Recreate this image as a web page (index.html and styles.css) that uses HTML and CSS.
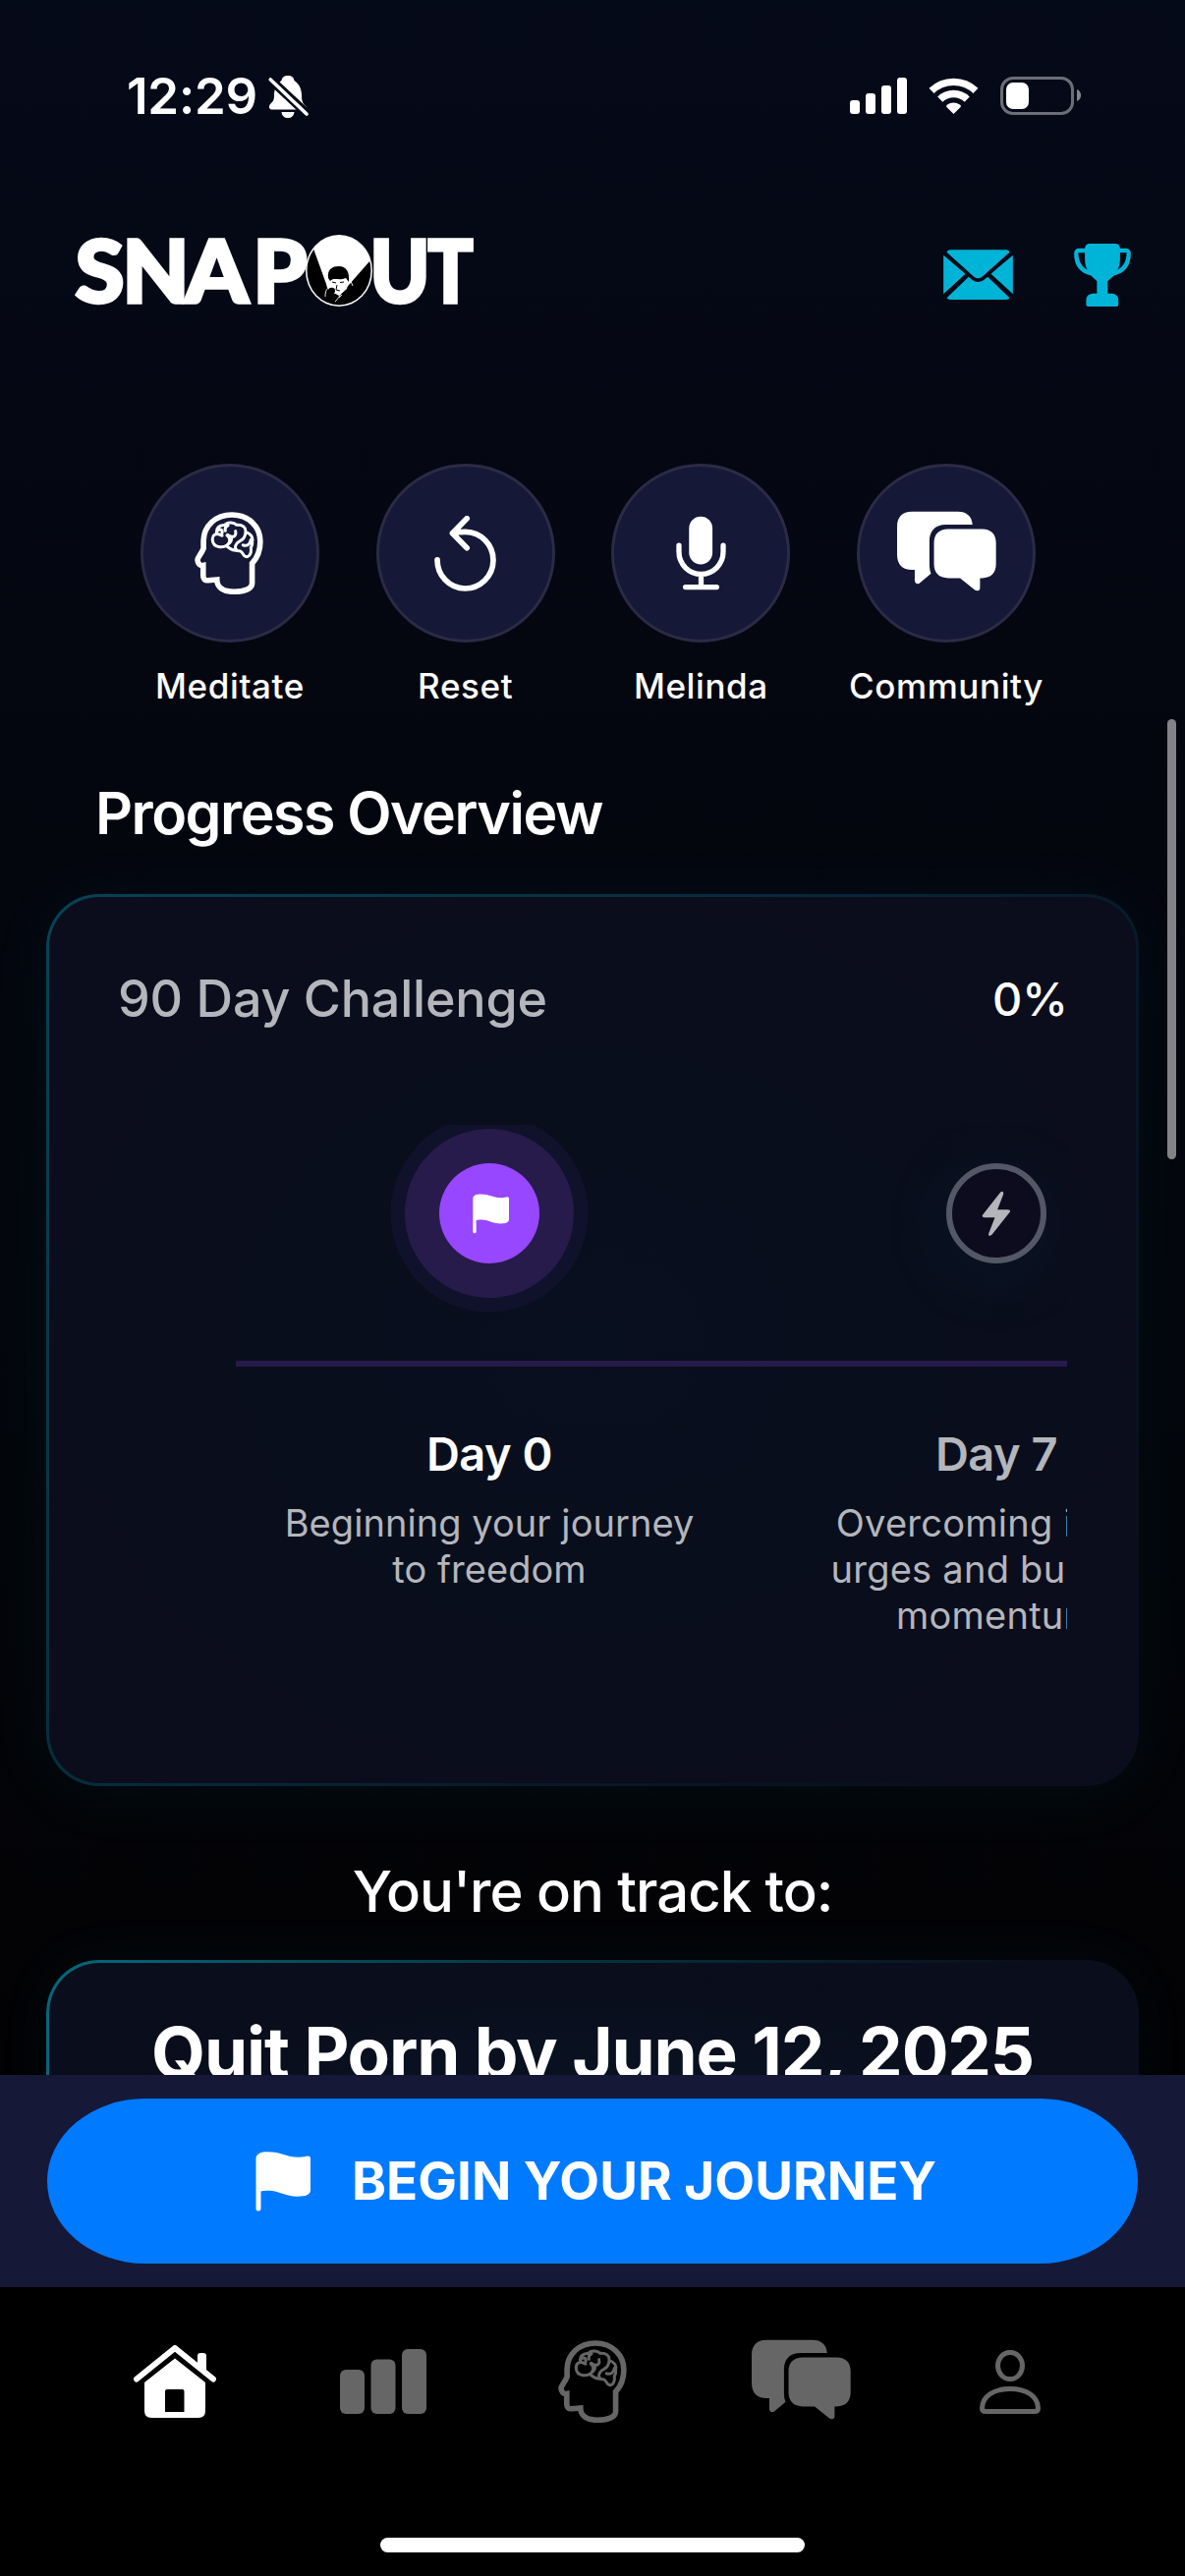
FILE: index.html
```html
<!DOCTYPE html>
<html lang="en">
<head>
<meta charset="utf-8">
<title>SnapOut</title>
<link rel="stylesheet" href="styles.css">
</head>
<body>
<svg class="defs" width="0" height="0">
  <symbol id="head" viewBox="204 212 210 253">
    <g fill="none" stroke="currentColor" stroke-linejoin="round" stroke-linecap="round">
      <path stroke-width="17" stroke-linejoin="miter" d="M318 221C370 221 405 258 405 303C405 332 396 353 380 370V430C380 448 355 457 325 457C292 457 272 443 272 420L245 422C235 423 230 417 230 408V376C220 378 212 369 213 358C214 350 224 342 231 324V300C232 255 268 221 318 221Z"/>
      <path stroke-width="9" d="M288 285C268 272 256 285 259 301C262 322 290 324 303 314C315 304 313 292 303 284M272 280C268 262 280 251 296 253C304 243 324 243 332 252C350 250 362 260 360 274C377 278 384 292 380 304C382 315 378 318 376 322C379 338 372 350 362 350C352 349 353 335 343 332C334 330 322 332 313 325L300 316M298 270C296 260 299 256 306 254M274 270C284 262 290 268 288 277M314 287C326 292 332 282 329 271M305 282L316 290C319 302 311 308 307 311M360 274C360 292 350 297 340 303C328 310 326 322 332 328M352 314C364 318 374 312 376 298"/>
    </g>
  </symbol>
  <symbol id="chats" viewBox="939 210 304 245">
    <path fill="currentColor" d="M1170 251C1168 225 1152 211 1125 211H984C955 211 939 228 939 257V343C939 372 955 390 984 390H993V422C993 432 1003 436 1010 429L1043 401C1040 395 1038 385 1038 372V302C1038 270 1056 251 1088 251ZM1096 265H1200C1227 265 1242 281 1242 308V372C1242 399 1227 415 1200 415H1193V445C1193 454 1183 456 1176 451L1132 415H1096C1067 415 1052 399 1052 372V308C1052 281 1067 265 1096 265Z"/>
  </symbol>
  <symbol id="flag" viewBox="260 2190 56 61">
    <path fill="currentColor" d="M260.5 2197C260.5 2192 266 2190.2 272 2190.2C287 2190.2 291 2195.8 304 2195.8C308 2195.8 311 2194.5 314 2194.5Q316 2194.7 316 2197V2229C316 2234 311 2235.7 303 2235.7C290 2235.7 284 2229.7 274 2229.7C269 2229.7 267 2230 265.5 2230.6V2248Q265.5 2250.5 263 2250.5Q260.5 2250.5 260.5 2248Z"/>
  </symbol>
</svg>

<header class="status">
  <div class="clock">
    <span class="time">12:29</span>
    <svg class="bell" viewBox="273 76 41 45">
      <path fill="#fff" d="M293 77C297 77 299 79 299.5 82C304 85 307 90 307 97C307 104 309 106 311 108C313.500 110 312 111.500 310 111.500H277C274 111.500 273 109 275 106C278 103 279 102 279 97C279 90 282 85 286.500 82C287 79 289 77 293 77ZM286.500 114H299.500C299 118 296.500 120 293 120S287 118 286.500 114Z"/>
      <path stroke="#050917" stroke-width="9" d="M270 76L317 120"/>
      <path stroke="#fff" stroke-width="3.600" stroke-linecap="round" d="M275.300 81L312 116"/>
    </svg>
  </div>
  <div class="signals">
    <svg class="bars" viewBox="0 0 58 37" fill="#fff">
      <rect y="23" width="10" height="14" rx="3"/><rect x="16" y="16" width="10" height="21" rx="3"/><rect x="32" y="8" width="10" height="29" rx="3"/><rect x="48" width="10" height="37" rx="3"/>
    </svg>
    <svg class="wifi" viewBox="436 117 151 112">
      <path fill="none" stroke="#fff" stroke-width="22" d="M443.500 157.500A98 98 0 0 1 579.500 157.500M470 184A59 59 0 0 1 553 184"/>
      <path fill="#fff" d="M511.500 229L490 208Q488 204 491 201Q511 188 532 201Q535 204 533 208Z"/>
    </svg>
    <svg class="battery" viewBox="1018 78 83 39">
      <rect x="1019.500" y="79.500" width="72" height="36" rx="11.500" fill="none" stroke="#6c6e77" stroke-width="3"/>
      <rect x="1024" y="84" width="23" height="27" rx="7" fill="#fff"/>
      <path fill="#84868d" d="M1096 91C1101.500 93 1101.500 101 1096 103Z"/>
    </svg>
  </div>
</header>

<div class="brand">
  <svg class="logo" viewBox="64 211 432 130">
    <g class="letters">
      <text x="76.500" y="308" textLength="50" lengthAdjust="spacingAndGlyphs">S</text>
      <text x="124.500" y="308" textLength="68" lengthAdjust="spacingAndGlyphs">N</text>
      <text x="188.500" y="308" textLength="64" lengthAdjust="spacingAndGlyphs">A</text>
      <text x="257.500" y="307.500" textLength="55" lengthAdjust="spacingAndGlyphs">P</text>
      <text x="376.500" y="307.500" textLength="61" lengthAdjust="spacingAndGlyphs">U</text>
      <text x="435.500" y="307.500" textLength="46" lengthAdjust="spacingAndGlyphs">T</text>
    </g>
    <clipPath id="disc"><ellipse cx="345" cy="275.500" rx="32.500" ry="35"/></clipPath>
    <ellipse cx="345" cy="275.500" rx="34" ry="36.500" fill="#fff"/>
    <g clip-path="url(#disc)">
      <path d="M319 253L332 289Q333 297 341 299L348 298L377 265L386 315H305V240Z"/>
      <path fill="#fff" d="M335 283L338 297L345 301L353 294L356 280Z"/>
      <path d="M334 283C333 274 338 271 345 271C352 271 356 276 355 287L352 283C345 286 340 282 336 286Z"/>
      <path fill="none" stroke="#000" d="M338 287L342 288M346 287.500L350 287M343 290L342 295L346 296"/>
      <ellipse cx="337.500" cy="296" rx="3.500" ry="3.200"/>
      <path fill="none" stroke="#fff" stroke-width=".9" d="M331 302C331 296 333 293 335 293M341 307C344 304 346 301 347 298M345 303L348 300M356 284L359 291"/>
    </g>
  </svg>
  <div class="actions">
    <svg class="mail" viewBox="480 642 212 153" fill="#00b4d8">
      <path d="M490 650Q493 643 500 643H672Q679 643 682 650L597 726Q585 734 574 726ZM480 659L547 716L480 778ZM692 659L625 716L692 778ZM557 725L569 736Q585 746 602 736L615 725L682 790Q678 795 672 795H500Q494 795 490 790Z"/>
    </svg>
    <svg class="trophy" viewBox="878 623 174 193" fill="#00b4d8" fill-rule="evenodd">
      <path d="M924 623H1006Q1018 625 1019 637H1036Q1052 638 1052 654C1052 690 1034 714 1000 721L981 738V776H994Q1014 778 1014 796V810Q1014 816 1008 816H921Q915 816 915 810V796Q915 778 935 776H948V738L930 721C896 714 878 690 878 654Q878 638 893 637H911Q912 625 924 623ZM891 651H911V670C911 685 914 697 919 703C900 694 891 675 891 651ZM1039 651H1019V670C1019 685 1016 697 1011 703C1030 694 1039 675 1039 651Z"/>
    </svg>
  </div>
</div>

<main class="content">
  <nav class="quick">
    <div class="quick-item">
      <div class="bubble"><svg class="ic-head"><use href="#head"/></svg></div>
      <span class="quick-label">Meditate</span>
    </div>
    <div class="quick-item">
      <div class="bubble"><svg class="ic-reset" viewBox="935 225 188 230" fill="none" stroke="#fff" stroke-width="17" stroke-linecap="round" stroke-linejoin="round"><path d="M944 359A85 86 0 1 0 1030 274Q1010 274 992 278M1034 233L990 278L1034 323"/></svg></div>
      <span class="quick-label">Reset</span>
    </div>
    <div class="quick-item">
      <div class="bubble"><svg class="ic-mic" viewBox="263 227 154 227" fill="none" stroke="#fff" stroke-width="16" stroke-linecap="round"><rect x="303" y="228" width="72" height="147" rx="36" fill="#fff" stroke="none"/><path d="M272 317V337A68 68 0 0 0 408 337V317M340 408V440M292 445H388"/></svg></div>
      <span class="quick-label">Melinda</span>
    </div>
    <div class="quick-item wide">
      <div class="bubble"><svg class="ic-chats"><use href="#chats"/></svg></div>
      <span class="quick-label">Community</span>
    </div>
  </nav>

  <h2 class="section-title">Progress Overview</h2>

  <section class="card challenge">
    <div class="card-head">
      <span class="card-title">90 Day Challenge</span>
      <span class="percent">0%</span>
    </div>
    <div class="timeline">
      <div class="step">
        <div class="node active"><svg class="node-flag"><use href="#flag"/></svg></div>
        <div class="rail"></div>
        <h3 class="day now">Day 0</h3>
        <p class="desc">Beginning your journey<br>to freedom</p>
      </div>
      <div class="step">
        <div class="node locked"><svg class="bolt" viewBox="1029 1128 78 124" fill="#b4b5bb"><path d="M1079 1132Q1088 1126 1087 1137L1071 1179H1099Q1109 1180 1103 1187L1056 1246Q1047 1253 1047 1244L1064 1200H1036Q1027 1199 1032 1192Z"/></svg></div>
        <div class="rail"></div>
        <h3 class="day">Day 7</h3>
        <p class="desc long">Overcoming initial<br>urges and building<br>momentum</p>
      </div>
    </div>
  </section>

  <p class="track">You're on track to:</p>

  <section class="card goal">
    <h2 class="goal-title">Quit Porn by June 12, 2025</h2>
  </section>
</main>

<div class="cta-bar">
  <div class="cta"><svg class="cta-flag"><use href="#flag"/></svg><span class="cta-text">BEGIN YOUR JOURNEY</span></div>
</div>

<footer class="tabs">
  <nav class="tab-row">
    <div class="tab on"><svg class="tab-home" viewBox="136 2387 84 74">
      <path fill="#fff" d="M178 2400.500L209 2425V2454Q209 2461 202 2461H154Q147 2461 147 2454V2425ZM170 2432Q168 2432 168 2434V2455H187.500V2434Q187.500 2432 185.500 2432ZM201 2408V2398Q201 2395 204 2395H207Q210 2395 210 2398V2416Z" fill-rule="evenodd"/>
      <path fill="none" stroke="#fff" stroke-width="6" stroke-linecap="round" stroke-linejoin="round" d="M139 2421.500L178 2390L217 2421.500"/></svg></div>
    <div class="tab"><svg class="tab-bars" viewBox="0 0 88 66" fill="currentColor"><rect y="21" width="25" height="45" rx="6"/><rect x="31.500" y="10.500" width="25" height="55.500" rx="6"/><rect x="63" width="25" height="66" rx="6"/></svg></div>
    <div class="tab"><svg class="ic-head"><use href="#head"/></svg></div>
    <div class="tab chat-tab"><svg class="ic-chats"><use href="#chats"/></svg></div>
    <div class="tab"><svg class="tab-person" viewBox="997 2392 62 65" fill="none" stroke="currentColor" stroke-width="5"><ellipse cx="1028" cy="2408" rx="12.500" ry="13.600"/><path stroke-linejoin="round" d="M999.500 2451C1000 2439 1011 2431.500 1028 2431.500S1056 2439 1056.500 2451Q1056.500 2454.500 1053 2454.500H1003Q999.500 2454.500 999.500 2451Z"/></svg></div>
  </nav>
  <div class="home-indicator"></div>
</footer>
<div class="scroll-thumb"></div>
</body>
</html>
```
FILE: styles.css
```css
* { box-sizing: border-box; margin: 0; padding: 0; }

body {
  position: relative;
  width: 1206px;
  height: 2622px;
  overflow: hidden;
  display: flex;
  flex-direction: column;
  background: linear-gradient(#050a19 0, #050814 340px, #04060f 800px, #030509 1500px, #030306 1950px, #000 2300px);
  color: #fff;
  font-family: Inter, "Liberation Sans", sans-serif;
}

svg { display: block; flex: none; }
.defs { position: absolute; }

/* status bar */
.status {
  flex: none;
  height: 195px;
  padding: 0 105px 0 129px;
  display: flex;
  align-items: center;
  justify-content: space-between;
}
.clock { display: flex; align-items: center; gap: 11px; }
.time { width: 133px; font-size: 51px; line-height: 60px; font-weight: 600; letter-spacing: -0.200px; white-space: nowrap; }
.bell { width: 41px; height: 45px; margin-top: 2px; }
.signals { display: flex; align-items: center; }
.bars { width: 58px; height: 37px; }
.wifi { width: 51px; height: 37px; margin-left: 22px; }
.battery { width: 83px; height: 39px; margin-left: 22px; }

/* brand row */
.brand {
  flex: none;
  height: 143px;
  padding: 19px 55px 0 64px;
  display: flex;
  align-items: center;
  justify-content: space-between;
}
.logo { width: 432px; height: 130px; }
.letters { font: 900 88px Lato, "Liberation Sans", sans-serif; fill: #fff; stroke: #fff; stroke-width: 3.500px; }
.actions { display: flex; align-items: center; gap: 62px; padding-top: 7px; }
.mail { width: 71px; height: 51px; }
.trophy { width: 58px; height: 64px; }

/* scroll area */
.content { flex: none; height: 1774px; overflow: hidden; }

.quick { display: flex; justify-content: center; gap: 57.700px; padding: 134px 0 0 1px; }
.quick-item { width: 182px; display: flex; flex-direction: column; align-items: center; }
.quick-item.wide { width: 202px; }
.bubble {
  width: 182px;
  height: 182px;
  border: 3px solid #2b2b45;
  border-radius: 50%;
  background: #151836;
  display: flex;
  align-items: center;
  justify-content: center;
}
.ic-head { width: 70px; height: 84px; }
.bubble .ic-head { margin-left: -2px; }
.ic-reset { width: 63px; height: 77px; }
.ic-mic { width: 51px; height: 76px; }
.ic-chats { width: 101px; height: 82px; }
.bubble .ic-chats { margin-top: -4px; margin-left: 1px; }
.quick-label { margin-top: 22px; font-size: 35px; line-height: 44px; font-weight: 500; letter-spacing: 0.600px; }

.section-title { margin: 73px 0 0 97px; font-size: 59px; line-height: 70px; font-weight: 600; letter-spacing: -1.500px; }

.card {
  width: 1112px;
  margin-left: 47px;
  border: 3px solid transparent;
  border-radius: 54px;
}
.challenge {
  height: 908px;
  margin-top: 47px;
  padding: 71px 70px 0;
  background:
    radial-gradient(farthest-side, #080f1e 0, #090e1c 65%, #0b0d1c 100%) padding-box,
    linear-gradient(125deg, #064355 0, #062c3b 40%, #071a29 65%, #0a0e1c 90%) border-box;
  box-shadow: 0 8px 70px rgba(0, 180, 216, 0.06);
}
.card-head { display: flex; justify-content: space-between; align-items: center; }
.card-title { font-size: 52px; line-height: 64px; font-weight: 500; letter-spacing: -0.200px; color: #b4b6bc; }
.percent { margin-right: -1px; font-size: 47px; line-height: 66px; font-weight: 450; }

.timeline { margin-top: 95px; height: 560px; padding-left: 120px; display: flex; overflow: hidden; }
.step { flex: none; width: 516px; padding-top: 39px; text-align: center; }
.node {
  width: 102px;
  height: 102px;
  margin: 0 auto;
  border-radius: 50%;
  display: flex;
  align-items: center;
  justify-content: center;
}
.active { background: #9747ff; box-shadow: 0 0 0 35px #271b4b, 0 0 0 49.500px #10122c; }
.locked { background: #0c0c1e; border: 6px solid #545866; box-shadow: 0 12px 90px rgba(0, 180, 216, 0.07); }
.node-flag { width: 37px; height: 41px; margin-left: 2px; }
.bolt { width: 30px; height: 47px; }
.rail { height: 6px; margin-top: 99px; background: #271a4b; }
.day { margin-top: 59px; font-size: 47px; line-height: 60px; font-weight: 600; letter-spacing: -0.500px; color: #b4b6bc; }
.day.now { color: #fff; }
.desc { margin-top: 17px; font-size: 38px; line-height: 47px; letter-spacing: 0.050px; color: #b4b6bc; white-space: nowrap; }
.desc.long { letter-spacing: 0.250px; }

.track { margin-top: 72px; text-align: center; font-size: 58px; line-height: 70px; font-weight: 500; letter-spacing: -1px; }

.goal {
  height: 400px;
  margin-top: 35px;
  padding-top: 49px;
  background:
    radial-gradient(farthest-side, #0a1322 0, #09101f 60%, #0a0d1b 100%) padding-box,
    linear-gradient(100deg, #05687a 0, #06333f 45%, #0a0e1b 85%) border-box;
  box-shadow: 0 0 60px rgba(0, 180, 216, 0.05);
}
.goal-title { text-align: center; font-size: 71px; line-height: 84px; font-weight: 700; letter-spacing: -1.200px; white-space: nowrap; }

/* call to action */
.cta-bar { flex: none; height: 216px; padding: 24px 48px; background: #151836; }
.cta {
  height: 168px;
  padding-left: 212px;
  border-radius: 100px / 84px;
  background: #007aff;
  display: flex;
  align-items: center;
  gap: 42px;
}
.cta-flag { width: 56px; height: 61px; }
.cta-text { font-size: 53px; line-height: 64px; font-weight: 700; letter-spacing: 0; white-space: nowrap; }

/* tab bar */
.tabs { flex: none; height: 294px; background: #000; display: flex; flex-direction: column; align-items: center; }
.tab-row { width: 1062px; height: 192px; display: flex; }
.tab { flex: 1; display: flex; align-items: center; justify-content: center; color: #666; }
.tab.on { color: #fff; }
.chat-tab { padding-bottom: 4px; }
.tab-home { width: 84px; height: 74px; }
.tab-bars { width: 88px; height: 66px; margin-left: -2px; }
.tab-person { width: 62px; height: 65px; }
.home-indicator { width: 432px; height: 15px; margin-top: 63px; border-radius: 8px; background: #fff; }

.scroll-thumb { position: absolute; left: 1188px; top: 732px; width: 9px; height: 448px; border-radius: 5px; background: #838387; }
```
